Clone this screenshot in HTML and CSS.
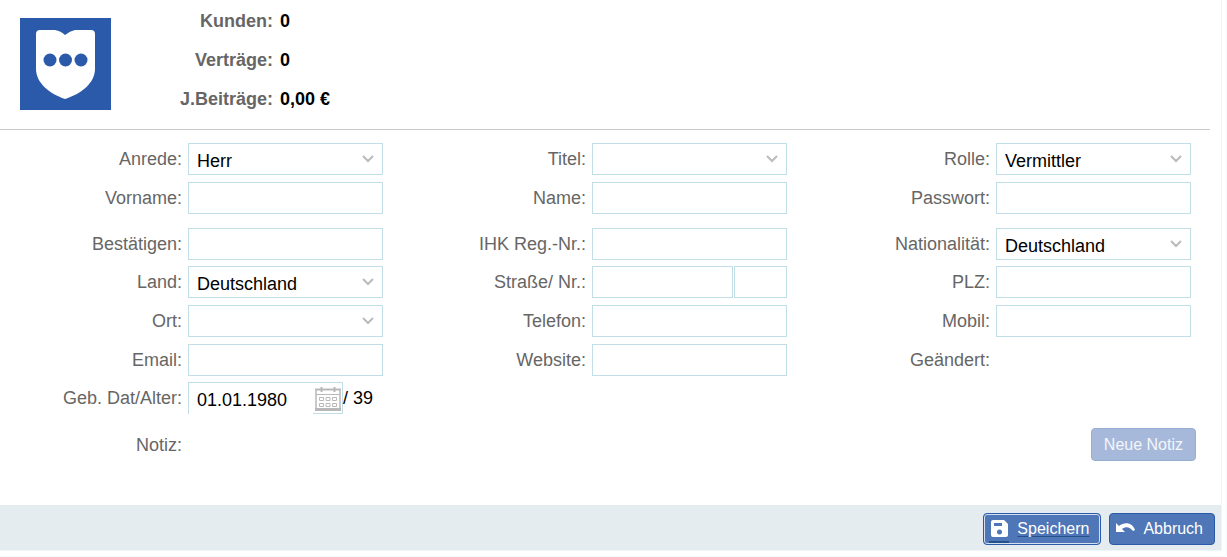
FILE: index.html
```html
<!DOCTYPE html>
<html lang="de">
<head>
    <meta charset="UTF-8">
    <meta name="viewport" content="width=device-width, initial-scale=1.0">
    <title>Vermittler</title>
    <link rel="stylesheet" href="styles.css">
</head>
<body>
    <div class="frame">
    <form class="window">
        <div class="summary">
            <svg class="logo" viewBox="0 0 91 92">
                <rect width="91" height="92" fill="#2c5aab"/>
                <path d="M20 12H35Q41 13 45 17Q50 13 55 12H71Q75 12 75 16V51C75 65 61 76 45 81C30 76 16 65 16 51V16Q16 12 20 12Z" fill="#fff"/>
                <circle cx="30" cy="42" r="6.500" fill="#2c5aab"/>
                <circle cx="45.500" cy="42" r="6.500" fill="#2c5aab"/>
                <circle cx="61" cy="42" r="6.500" fill="#2c5aab"/>
            </svg>
            <dl class="stats">
                <dt>Kunden:</dt><dd>0</dd>
                <dt>Verträge:</dt><dd>0</dd>
                <dt>J.Beiträge:</dt><dd>0,00 €</dd>
            </dl>
        </div>

        <div class="fields">
            <div class="group">
                <div class="field">
                    <label for="anrede">Anrede:</label>
                    <div class="select">
                        <select id="anrede"><option>Herr</option><option>Frau</option></select>
                        <svg class="chevron" viewBox="0 0 12 8"><path d="M1 1L6 6L11 1"/></svg>
                    </div>
                </div>
                <div class="field">
                    <label for="titel">Titel:</label>
                    <div class="select">
                        <select id="titel"><option></option><option>Dr.</option></select>
                        <svg class="chevron" viewBox="0 0 12 8"><path d="M1 1L6 6L11 1"/></svg>
                    </div>
                </div>
                <div class="field">
                    <label for="rolle">Rolle:</label>
                    <div class="select">
                        <select id="rolle"><option>Vermittler</option></select>
                        <svg class="chevron" viewBox="0 0 12 8"><path d="M1 1L6 6L11 1"/></svg>
                    </div>
                </div>
                <div class="field">
                    <label for="vorname">Vorname:</label>
                    <input type="text" id="vorname">
                </div>
                <div class="field">
                    <label for="name">Name:</label>
                    <input type="text" id="name">
                </div>
                <div class="field">
                    <label for="passwort">Passwort:</label>
                    <input type="password" id="passwort">
                </div>
            </div>

            <div class="group group--spaced">
                <div class="field">
                    <label for="bestaetigen">Bestätigen:</label>
                    <input type="password" id="bestaetigen">
                </div>
                <div class="field">
                    <label for="ihk">IHK Reg.-Nr.:</label>
                    <input type="text" id="ihk">
                </div>
                <div class="field">
                    <label for="nationalitaet">Nationalität:</label>
                    <div class="select">
                        <select id="nationalitaet"><option>Deutschland</option></select>
                        <svg class="chevron" viewBox="0 0 12 8"><path d="M1 1L6 6L11 1"/></svg>
                    </div>
                </div>
            </div>

            <div class="group group--close">
                <div class="field">
                    <label for="land">Land:</label>
                    <div class="select">
                        <select id="land"><option>Deutschland</option></select>
                        <svg class="chevron" viewBox="0 0 12 8"><path d="M1 1L6 6L11 1"/></svg>
                    </div>
                </div>
                <div class="field">
                    <label for="strasse">Straße/ Nr.:</label>
                    <div class="street">
                        <input type="text" id="strasse">
                        <input type="text" class="street__number" aria-label="Hausnummer">
                    </div>
                </div>
                <div class="field">
                    <label for="plz">PLZ:</label>
                    <input type="text" id="plz">
                </div>
                <div class="field">
                    <label for="ort">Ort:</label>
                    <div class="select">
                        <select id="ort"><option></option></select>
                        <svg class="chevron" viewBox="0 0 12 8"><path d="M1 1L6 6L11 1"/></svg>
                    </div>
                </div>
                <div class="field">
                    <label for="telefon">Telefon:</label>
                    <input type="tel" id="telefon">
                </div>
                <div class="field">
                    <label for="mobil">Mobil:</label>
                    <input type="tel" id="mobil">
                </div>
                <div class="field">
                    <label for="email">Email:</label>
                    <input type="email" id="email">
                </div>
                <div class="field">
                    <label for="website">Website:</label>
                    <input type="text" id="website">
                </div>
                <div class="field">
                    <label for="geaendert">Geändert:</label>
                    <output id="geaendert"></output>
                </div>
            </div>

            <div class="group group--close">
                <div class="field">
                    <label for="geburtsdatum">Geb. Dat/Alter:</label>
                    <div class="date">
                        <input type="text" id="geburtsdatum" value="01.01.1980">
                        <button type="button" class="date__button" aria-label="Kalender">
                            <svg viewBox="0 0 26 26" width="26" height="26" fill="none" stroke="#b8b8b8">
                                <path d="M1 5V25M25 5V25" stroke-width="1.500"/>
                                <path d="M0 4.500H26" stroke-width="2"/>
                                <path d="M1 9.500H25"/>
                                <path d="M0 24.500H26" stroke-width="3"/>
                                <path d="M6.500 2V7M19.500 2V7" stroke-width="2"/>
                                <path d="M4.500 12.500h4v3h-4zM11 12.500h4v3h-4zM17.500 12.500h4v3h-4zM4.500 18.500h4v3h-4zM11 18.500h4v3h-4zM17.500 18.500h4v3h-4z"/>
                            </svg>
                        </button>
                        <span>/ 39</span>
                    </div>
                </div>
            </div>
        </div>

        <div class="note">
            <span class="note__label">Notiz:</span>
            <button type="button" class="button" disabled>Neue Notiz</button>
        </div>

        <div class="toolbar">
            <button type="button" class="button button--icon button--focus">
                <svg viewBox="0 0 20 28" width="20" height="28">
                    <path d="M4 5H15L19 9V20Q19 22 17 22H4Q2 22 2 20V7Q2 5 4 5ZM5 8V11H13V8ZM10.500 14.500A2.500 2.500 0 1 0 10.500 19.500A2.500 2.500 0 1 0 10.500 14.500Z" fill="#fff" fill-rule="evenodd"/>
                    <path d="M0 27H20" stroke="#24508b" stroke-width="2"/>
                </svg>
                <span>Speichern</span>
            </button>
            <button type="button" class="button button--icon">
                <svg viewBox="0 0 20 18" width="20" height="18">
                    <path d="M0 3L3 6C9 1 17 3 19 10L17 11C14 7 10 6 6 9L9 12H0Z" fill="#fff"/>
                </svg>
                <span>Abbruch</span>
            </button>
        </div>
    </form>
    </div>
</body>
</html>
```

FILE: styles.css
```css
* {
    box-sizing: border-box;
}

body {
    margin: 0;
    background: #fff;
    font-family: "Liberation Sans", Arial, sans-serif;
    font-size: 18px;
    line-height: 20px;
    color: #000;
}

input,
select,
button {
    margin: 0;
    font: inherit;
    color: inherit;
}

.frame {
    padding: 0 4px 5px 0;
    border-right: 1px solid #f3fafb;
    border-bottom: 1px solid #f3fafb;
    border-bottom-right-radius: 4px;
}

.window {
    border-right: 1px solid #eef7f8;
    border-bottom: 1px solid #eef7f8;
}

/* Head with logo and totals */
.summary {
    display: flex;
    height: 130px;
    margin-right: 11px;
    border-bottom: 1px solid #c8c8c8;
}

.logo {
    width: 91px;
    height: 92px;
    margin: 18px 0 0 20px;
}

.stats {
    display: grid;
    grid-template-columns: 162px auto;
    grid-auto-rows: 39px;
    column-gap: 7px;
    margin: 2px 0 0;
    line-height: 39px;
    font-weight: bold;
}

.stats dt {
    text-align: right;
    color: #666;
}

.stats dd {
    margin: 0;
}

/* Form fields */
.fields {
    padding: 13px 9px 0 0;
}

.group {
    display: grid;
    grid-template-columns: repeat(3, 1fr);
    row-gap: 7px;
}

.group--spaced {
    margin-top: 14px;
}

.group--close {
    margin-top: 6px;
}

.field {
    display: grid;
    grid-template-columns: 182px minmax(0, 1fr);
    column-gap: 6px;
    align-items: center;
    height: 32px;
    padding-right: 21px;
}

.field label,
.note__label {
    text-align: right;
    color: #666;
}

.field input,
.field select {
    display: block;
    width: 100%;
    height: 32px;
    padding: 4px 8px 0;
    border: 1px solid #c1dde6;
    border-radius: 0;
    background: #fff;
    outline: none;
}

.select {
    position: relative;
}

.field select {
    appearance: none;
}

.chevron {
    position: absolute;
    top: 12px;
    right: 9px;
    width: 12px;
    height: 8px;
    fill: none;
    stroke: #bbb;
    stroke-width: 2;
    pointer-events: none;
}

.street {
    display: flex;
    gap: 1px;
}

.field .street__number {
    flex: none;
    width: 53px;
}

.date {
    display: flex;
    align-items: center;
}

.field .date input {
    width: 125px;
    border-width: 1px 0 0 1px;
}

.date__button {
    display: flex;
    align-items: center;
    width: 30px;
    height: 32px;
    padding: 2px;
    border: 1px solid #c1dde6;
    border-left: 0;
    background: none;
}

.date__button svg {
    flex: none;
}

/* Notes */
.note {
    display: flex;
    align-items: center;
    justify-content: space-between;
    padding: 14px 25px 44px 0;
}

.note__label {
    width: 182px;
}

/* Buttons */
.button {
    display: flex;
    align-items: center;
    height: 33px;
    padding: 0 12px;
    border: 1px solid #2c5aab;
    border-radius: 4px;
    background: #4f76b6;
    color: #fff;
    font-size: 16px;
}

.button:disabled {
    border-color: #96add4;
    background: #a7b9da;
    color: #f3f6fb;
}

.button--icon {
    gap: 7px;
    height: 32px;
    padding: 0 11px 0 6px;
}

.button--focus {
    gap: 8px;
    padding-left: 5px;
    box-shadow: inset 0 0 0 1px #d5dfef;
}

.button--focus span {
    text-decoration: underline;
    text-decoration-color: #24508b;
    text-underline-offset: 2px;
}

.toolbar {
    display: flex;
    justify-content: flex-end;
    gap: 8px;
    padding: 8px 6px 5px;
    background: #e4ecef;
}
```
